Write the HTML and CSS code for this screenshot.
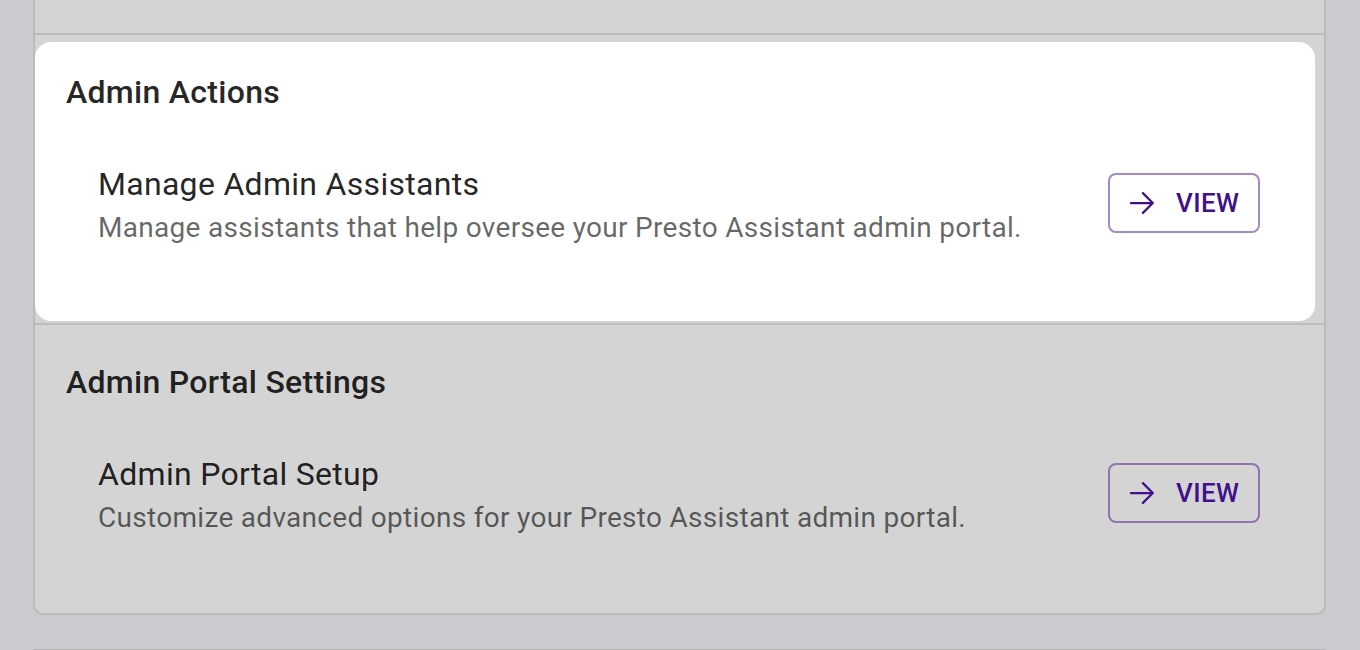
FILE: index.html
```html
<!DOCTYPE html>
<html lang="en">
<head>
<meta charset="utf-8">
<title>Admin Settings</title>
<link rel="stylesheet" href="styles.css">
</head>
<body>
<div class="page">
  <div class="card">
    <div class="prev-section"></div>
    <section class="section">
      <div class="section-inner highlighted">
        <h2 class="section-title">Admin Actions</h2>
        <div class="row">
          <div class="row-text">
            <div class="row-title">Manage Admin Assistants</div>
            <div class="row-desc">Manage assistants that help oversee your Presto Assistant admin portal.</div>
          </div>
          <button class="view-btn" type="button">
            <svg class="view-icon" viewBox="0 0 24 24" aria-hidden="true"><path d="M4.6 12h14.4M12.6 5.4 19.2 12l-6.6 6.6"/></svg>
            <span>VIEW</span>
          </button>
        </div>
      </div>
    </section>
    <section class="section last">
      <div class="section-inner">
        <h2 class="section-title">Admin Portal Settings</h2>
        <div class="row">
          <div class="row-text">
            <div class="row-title">Admin Portal Setup</div>
            <div class="row-desc">Customize advanced options for your Presto Assistant admin portal.</div>
          </div>
          <button class="view-btn" type="button">
            <svg class="view-icon" viewBox="0 0 24 24" aria-hidden="true"><path d="M4.6 12h14.4M12.6 5.4 19.2 12l-6.6 6.6"/></svg>
            <span>VIEW</span>
          </button>
        </div>
      </div>
    </section>
  </div>
  <div class="card next-card"></div>
</div>
</body>
</html>
```

FILE: styles.css
```css
* { box-sizing: border-box; }

html, body {
  margin: 0;
  padding: 0;
  background: #cbcbcf;
  font-family: Roboto, "Liberation Sans", sans-serif;
  overflow: hidden;
}

.page {
  padding-left: 33px;
  width: 1326px;
}

.card {
  width: 1293px;
  background: #d4d4d4;
  border: 2px solid #bbbbbb;
  border-top: none;
  border-radius: 0 0 10px 10px;
}

.prev-section {
  height: 35px;
  border-bottom: 2px solid #bdbdbd;
}

.section {
  height: 290px;
  padding: 7px 9px 2px 0;
  border-bottom: 2px solid #bdbdbd;
}

.section.last {
  height: 288px;
  border-bottom: none;
}

.section-inner {
  height: 100%;
  padding: 30px 55px 0 31px;
  border-radius: 16px;
}

.section-inner.highlighted {
  background: #ffffff;
}

.section-title {
  margin: 0;
  font-size: 32px;
  line-height: 40px;
  font-weight: 500;
  letter-spacing: 0.3px;
  color: rgba(0, 0, 0, 0.87);
}

.row {
  display: flex;
  align-items: flex-start;
  justify-content: space-between;
  margin-top: 52px;
  padding-left: 32px;
}

.row-title {
  font-size: 32px;
  line-height: 40px;
  letter-spacing: 0.3px;
  color: rgba(0, 0, 0, 0.87);
}

.row-desc {
  margin-top: 3px;
  font-size: 28px;
  line-height: 42px;
  letter-spacing: 0.3px;
  color: rgba(0, 0, 0, 0.6);
}

.view-btn {
  display: flex;
  align-items: center;
  flex-shrink: 0;
  height: 60px;
  width: 152px;
  margin-top: 9px;
  padding: 0 0 0 14px;
  background: transparent;
  border: 2px solid rgba(74, 20, 140, 0.5);
  border-radius: 8px;
  color: #42108a;
  font-family: Roboto, "Liberation Sans", sans-serif;
  font-size: 26px;
  font-weight: 500;
  letter-spacing: 0.4px;
}

.view-icon {
  width: 36px;
  height: 36px;
  margin-right: 16px;
  fill: none;
  stroke: #42108a;
  stroke-width: 1.5;
  stroke-linecap: round;
  stroke-linejoin: round;
}

.next-card {
  margin-top: 34px;
  height: 2px;
  border-top: 2px solid #b4b4b4;
  border-bottom: none;
  border-radius: 10px 10px 0 0;
}
```
